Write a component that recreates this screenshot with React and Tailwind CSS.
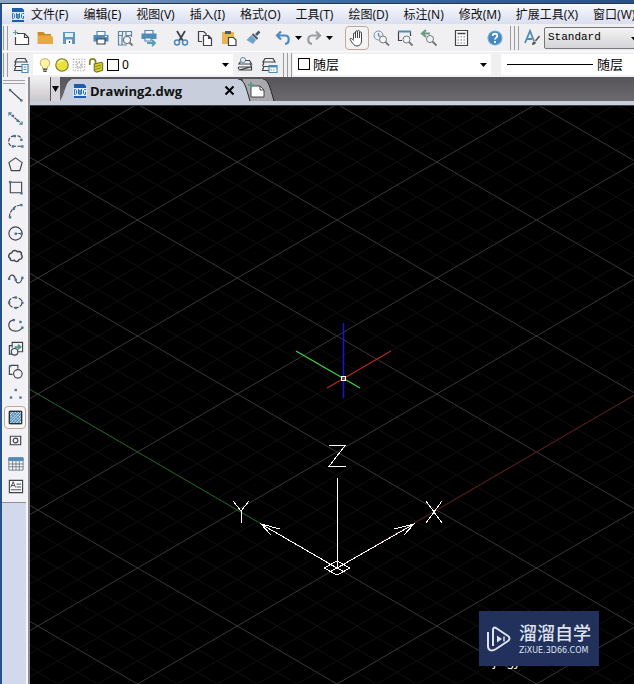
import React, { useState } from 'react';

const MENUS = [
  '文件(F)', '编辑(E)', '视图(V)', '插入(I)', '格式(O)', '工具(T)',
  '绘图(D)', '标注(N)', '修改(M)', '扩展工具(X)', '窗口(W)',
];

const DARK = '#3f444b';
const BLUE = '#4f8ab8';

const Icon = ({ children, size = 18 }) => (
  <svg
    width={size}
    height={size}
    viewBox="0 0 18 18"
    fill="none"
    stroke={DARK}
    strokeWidth="1.2"
    className="shrink-0"
    aria-hidden="true"
  >
    {children}
  </svg>
);

const Caret = ({ className = '' }) => (
  <svg width="7" height="4" viewBox="0 0 7 4" className={`shrink-0 ${className}`} aria-hidden="true">
    <path d="M0 0h7L3.5 4z" fill="#000" />
  </svg>
);

const Grip = () => (
  <div className="flex h-6 shrink-0 gap-[3px] px-px">
    <div className="w-px bg-[#9b9a9f]" />
    <div className="w-px bg-[#9b9a9f]" />
  </div>
);

const DwgLogo = () => (
  <svg width="14" height="16" viewBox="0 0 14 16" className="shrink-0" aria-hidden="true">
    <path d="M1 1h10l2 2v2H1z" fill="#1f5cab" />
    <path d="M0 5h14v8H0z" fill="#dcebfa" />
    <path d="M1 13h12v2H1z" fill="#1f5cab" />
    <g fill="none" stroke="#2f6fb8" strokeWidth="1">
      <path d="M1.500 6.500h1l1 1v3l-1 1h-1z" />
      <path d="M5.500 6v5l1 .5.5-.5V7v4l1 .5.500-.5V6" />
      <path d="M13 6.500h-1.500l-1 1v3l1 1h1v-2.500" />
    </g>
  </svg>
);

/* Main toolbar icons */
const STANDARD = {
  new: (
    <>
      <path d="M5 4.500h7.500l4 4v7H3.500V8" fill="#fff" />
      <path d="M12.500 4.500v4h4" />
      <path d="M1 3.500h5M3.500 1v5" stroke="#5aa0a0" />
    </>
  ),
  open: (
    <>
      <path d="M1.500 3h6l1.500 2h6v3h-13z" fill="#c98a25" stroke="none" />
      <path d="M1.500 15V6.500h13L17 8v7z" fill="#e8a941" stroke="none" />
    </>
  ),
  save: (
    <>
      <path d="M3 3h12v12H3z" fill="#5d97c2" stroke="none" />
      <path d="M5 4h8v4H5z" fill="#e6f0f7" stroke="none" />
      <path d="M6 10.500h6V15H6z" fill="#fff" stroke="none" />
      <path d="M9.500 12v2" />
    </>
  ),
  print: (
    <>
      <path d="M5 6V2.500h8V6" stroke={BLUE} fill="#f7f9fb" />
      <path d="M1.500 6h15v6.500h-15z" fill={BLUE} stroke="none" />
      <path d="M5 10h8v5H5z" fill="#f7f9fb" stroke={DARK} />
      <path d="M13 7.500h2" stroke="#fff" />
    </>
  ),
  preview: (
    <>
      <path d="M11 16H2.500V2.500h13V8M2.500 6.500h4v-4M6 6.500v9M6 11h3M10 2.500v4h5" stroke="#5b88a8" />
      <circle cx="11" cy="11" r="3.500" stroke="#777" fill="#eef4f8" />
      <path d="M13.500 13.500l3 3" stroke="#777" strokeWidth="2" />
    </>
  ),
  publish: (
    <>
      <path d="M5 5V1.500h8V5" stroke={BLUE} fill="#f7f9fb" />
      <path d="M1.500 4.500h15V10h-15z" fill={BLUE} stroke="none" />
      <path d="M5 9h6v3H5z" fill="#f7f9fb" stroke={BLUE} />
      <path d="M7 14h8M12 11l3 3-3 3" stroke="#5a9bb0" strokeWidth="1.800" />
    </>
  ),
  cut: (
    <>
      <path d="M5 2l6 10M13 2L7 12" strokeWidth="1.800" />
      <circle cx="5" cy="13.500" r="2.500" stroke={BLUE} strokeWidth="1.500" />
      <circle cx="13" cy="13.500" r="2.500" stroke={BLUE} strokeWidth="1.500" />
    </>
  ),
  copy: (
    <>
      <path d="M6 12.500H2.500v-10h5l2.500 2V6" />
      <path d="M7.500 6.500h5l3 3v7h-8zM12.500 6.500v3h3" fill="#fff" />
    </>
  ),
  paste: (
    <>
      <path d="M2 3h12v12H2z" fill="#e7b459" stroke="none" />
      <path d="M5 2h6v3H5z" fill="#55585e" stroke="none" />
      <path d="M8.500 8.500h5l2.500 2.500v5.500H8.500z" fill="#fff" />
    </>
  ),
  match: (
    <>
      <path d="M15.500 2.500L12 6" stroke="#47596e" strokeWidth="2.500" />
      <path d="M8.500 5l5 5" stroke="#47596e" strokeWidth="2.200" />
      <path d="M7.500 6l4.500 5-3 4L2.500 11z" fill="#6fa3c9" stroke="none" />
    </>
  ),
  undo: <path d="M7 2.500L3 6.500l4 4M3.500 6.500H11c5 0 5 8 0 8.500" stroke="#4d8cc0" strokeWidth="2.200" />,
  redo: <path d="M11 2.500l4 4-4 4M14.500 6.500H7c-5 0-5 8 0 8.500" stroke="#9a9da1" strokeWidth="2.200" />,
  hand: (
    <path
      d="M5.500 10.500V5c0-1.500 2-1.500 2 0V3c0-1.500 2-1.500 2 0V2.500c0-1.500 2-1.500 2 0V4c0-1.500 2-1.500 2 0v8c0 3-2 5-4.500 5S5.500 15.500 3 12c-2-3 0-4 2.500-.5M7.500 5v4M9.500 3v6M11.500 4v5"
      fill="#fff"
      strokeWidth="1"
    />
  ),
  zoomRt: (
    <>
      <circle cx="6.500" cy="6.500" r="4.500" stroke="#7b8fa0" strokeWidth="1" />
      <path d="M6.500 4v3h2" stroke={BLUE} />
      <circle cx="11" cy="10.500" r="3.500" stroke="#777" fill="#f3f6f8" strokeWidth="1" />
      <path d="M13.500 13l3.500 3.500" stroke="#777" strokeWidth="1.800" />
    </>
  ),
  zoomWin: (
    <>
      <path d="M6 11.500H2.500v-9h12V7" />
      <path d="M2 2.500h13" stroke={BLUE} strokeWidth="2" />
      <circle cx="10.500" cy="10.500" r="3.500" stroke="#777" fill="#eef4f8" strokeWidth="1" />
      <path d="M13 13l3.500 3.500" stroke="#777" strokeWidth="1.800" />
    </>
  ),
  zoomPrev: (
    <>
      <path d="M6 1L2 4.500 6 8M3 4.500h7" stroke="#6b9c86" strokeWidth="2.200" />
      <circle cx="10" cy="10" r="3.500" stroke="#777" fill="#eef4f8" strokeWidth="1" />
      <path d="M12.500 12.500l4 4" stroke="#777" strokeWidth="1.800" />
    </>
  ),
  calc: (
    <>
      <path d="M3.500 1.500h12v15h-12z" fill="#fff" />
      <path d="M5.500 4.500h8" strokeWidth="1.500" />
      <path d="M5.500 8h8M5.500 11h8M5.500 14h8" strokeDasharray="1.500 1.500" stroke="#777" />
    </>
  ),
  help: (
    <>
      <circle cx="9" cy="9" r="7" fill="#4488bd" stroke="#7aaacf" />
      <path d="M6.700 7c0-3 4.600-3 4.600 0 0 1.500-2.300 1.800-2.300 3.500M9 12v2" stroke="#fff" strokeWidth="1.800" />
    </>
  ),
  textStyle: (
    <>
      <path d="M2 14L7 2l4 10M4 10h5" stroke={BLUE} strokeWidth="1.800" />
      <path d="M16.500 7l-4 5" stroke="#555" strokeWidth="1.500" />
      <path d="M9 16c0-3 1.500-4 3-3.500 1.500.5 1 3.500-3 3.500z" fill="#555" stroke="none" />
    </>
  ),
};

const stack = <path d="M5 2.500h8L15 6H3zM3.500 6v2l-1 2M3 10.500h12M3.500 10.500v1l-1 3h8" />;

const LAYER = {
  manager: (
    <>
      {stack}
      <path d="M10 8.500h6v8h-6z" fill="#fff" stroke={BLUE} />
      <path d="M11.500 11h3M11.500 13.500h3" stroke={BLUE} />
    </>
  ),
  current: (
    <>
      <circle cx="7" cy="4" r="2.500" stroke="#5b88a8" strokeWidth="1" />
      <path d="M9.500 4.500h4l2 3.500H3l1.500-2.500M2.500 11h13l-1-3M2.500 11v2M15.500 11v3h-13z" />
    </>
  ),
  states: (
    <>
      {stack}
      <path d="M9 9.500h8v7H9z" fill="#fff" stroke={BLUE} />
      <path d="M9 10.500h8" stroke={BLUE} strokeWidth="2" />
      <path d="M10.500 14h5" stroke={BLUE} strokeDasharray="1.500 1" />
    </>
  ),
  bulb: (
    <>
      <path d="M6 11C1.500 7 4 2 9 2s7.500 5 3 9l-.5 2h-5z" fill="#fdf3a8" stroke="#b99b3b" strokeWidth="1" />
      <path d="M6.500 14h5M7 16h4" stroke="#555" strokeWidth="1.500" />
    </>
  ),
  sun: (
    <>
      <circle cx="9" cy="9" r="7" fill="#e8e13c" stroke="#77752e" strokeWidth="1.200" />
      <path d="M5 7c1-3 4-3.500 6-2.500" stroke="#fffbb0" strokeWidth="1.500" />
    </>
  ),
  freeze: (
    <>
      <path d="M2.500 2.500h13v13h-13zM5.500 5.500h7v7h-7z" stroke="#aaa" strokeDasharray="1.500 1.500" />
      <circle cx="9" cy="9" r="2.500" stroke="#999" strokeDasharray="1.500 1" />
    </>
  ),
  lock: (
    <>
      <path d="M2 9V5c0-4 6.500-4 6.500 0v3" stroke="#8a8420" strokeWidth="2" />
      <path d="M7 8l8-2 1.500 1v8l-7 2L7 15.500z" fill="#ded534" stroke="#77721f" />
      <path d="M8 11l7-2M8 14l7-2" stroke="#77721f" strokeWidth="1" />
    </>
  ),
};

/* Draw toolbar, top to bottom */
const dot = (x, y) => <rect x={x - 1} y={y - 1} width="2.500" height="2.500" fill="#4a7394" stroke="none" />;

const DRAW = [
  ['直线', <>
    <path d="M3 3l12 11" />{dot(3, 3)}{dot(15, 14)}
  </>],
  ['构造线', <>
    <path d="M2 3l14 12" strokeDasharray="3 1" /><path d="M2 6V3h3M16 12v3h-3" stroke={BLUE} />{dot(6, 6)}{dot(11, 11)}
  </>],
  ['多段线', <>
    <path d="M8 3C0 3 0 14 6 14h10M11 3c3 0 4 2 4 4" strokeDasharray="4 1.500" />{dot(8, 3)}{dot(6, 14)}{dot(16, 14)}{dot(15, 7)}
  </>],
  ['正多边形', <path d="M9 2l7 5-2.500 8.500h-9L2 7z" />],
  ['矩形', <>
    <path d="M3.500 3.500h12v11h-12z" />{dot(3, 3)}{dot(15, 15)}
  </>],
  ['圆弧', <>
    <path d="M2.500 16C3 9 8 3.500 15.500 3" strokeDasharray="4 1" />{dot(3, 16)}{dot(7, 7)}{dot(15, 3)}
  </>],
  ['圆', <>
    <circle cx="9" cy="9" r="7" /><path d="M9 9h6" strokeDasharray="2 1" />{dot(9, 9)}{dot(15, 9)}
  </>],
  ['修订云线', <path d="M5 5c1-3 5-3 6-1 3-1 5 1 4 3 2 2 1 5-2 5-1 3-4 3-5 1-3 1-5 0-4.500-2C1 10 1 6 5 5z" strokeWidth="1.500" />],
  ['样条曲线', <>
    <path d="M2 8c2-6 6-4 7 1s5 5 7-1" />{dot(2, 8)}{dot(9, 9)}{dot(16, 7)}
  </>],
  ['椭圆', <>
    <ellipse cx="9" cy="9" rx="7" ry="5.500" strokeDasharray="5 1.500" />{dot(9, 3.5)}{dot(2, 9)}{dot(16, 9)}{dot(9, 14.5)}
  </>],
  ['椭圆弧', <>
    <path d="M7 3C-1 5 1 15 9 15c4 0 6-2 7-4" />{dot(7, 3)}{dot(14, 5)}{dot(16, 11)}
  </>],
  ['插入块', <>
    <path d="M5.500 8V2.500h11v10H11M5 6H2.500v9H5" />
    <circle cx="8" cy="12.500" r="3.500" fill="#f3f3f7" />
    <path d="M8 7.500h6M11.500 5l3 2.500-3 2.500" stroke="#5a9680" strokeWidth="1.800" />
  </>],
  ['创建块', <>
    <path d="M4 2.500h7.500V6M2.500 4v8H6" /><circle cx="11.500" cy="11.500" r="4.500" fill="#f3f3f7" />{dot(3, 3)}
  </>],
  ['点', <>{dot(9, 4)}{dot(4, 12)}{dot(14, 12)}</>],
  ['图案填充', <>
    <rect x="2.500" y="2.500" width="13" height="13" fill="#dcebf6" />
    <path d="M3 5l2-2M3 8l5-5M3 11l8-8M3 14l11-11M5 15L15 5M8 15l7-7M11 15l4-4" stroke={BLUE} strokeWidth="1.200" />
    <path d="M3 12l3 3M3 8l7 7M3 4l11 11M6 3l9 9M10 3l5 5" stroke={BLUE} strokeWidth=".8" />
    <rect x="2.500" y="2.500" width="13" height="13" rx="1" stroke="#26303a" />
  </>],
  ['面域', <>
    <path d="M3.500 4.500h11v9h-11z" /><circle cx="9" cy="9" r="2.500" />
  </>],
  ['表格', <>
    <path d="M2 3h15v13H2z" fill="#fff" stroke="#6b7886" strokeWidth="1" />
    <path d="M2 3h15v3H2z" fill={BLUE} stroke={BLUE} strokeWidth="1" />
    <path d="M2 9.500h15M2 12.500h15M6 6v10M9.500 6v10M13 6v10" stroke="#6b7886" strokeWidth="1" />
  </>],
  ['多行文字', <>
    <path d="M2.500 2.500h14v13h-14z" fill="#fff" />
    <path d="M4 10l2.500-6L9 10M5 8h3M10 6.500h5M10 9.500h5M4 12.500h11" strokeWidth="1" />
  </>],
];

const ToolButton = ({ name, icon, active }) => (
  <button
    type="button"
    aria-label={name}
    className={`flex h-6 w-6 shrink-0 items-center justify-center ${
      active ? 'rounded-sm border border-[#c2a89c] bg-[#f4f2f3]' : ''
    }`}
  >
    <Icon>{icon}</Icon>
  </button>
);

const MenuBar = () => (
  <nav className="flex h-5 shrink-0 items-center overflow-hidden border-t border-[#f8faff] bg-linear-to-b from-[#f6f8fd] to-[#d9def0] pl-[9px] whitespace-nowrap">
    <DwgLogo />
    <div className="flex gap-[15px] pl-[6px] text-xs leading-5 text-[#111]">
      {MENUS.map((menu) => (
        <button key={menu} type="button">{menu}</button>
      ))}
    </div>
  </nav>
);

const StandardToolbar = () => (
  <div className="flex h-[27px] shrink-0 items-center overflow-hidden bg-[#f0eff1]">
    <Grip />
    <ToolButton name="新建" icon={STANDARD.new} />
    <ToolButton name="打开" icon={STANDARD.open} />
    <ToolButton name="保存" icon={STANDARD.save} />
    <div className="flex pl-2">
      <ToolButton name="打印" icon={STANDARD.print} />
      <ToolButton name="打印预览" icon={STANDARD.preview} />
      <ToolButton name="发布" icon={STANDARD.publish} />
    </div>
    <div className="flex pl-2">
      <ToolButton name="剪切" icon={STANDARD.cut} />
      <ToolButton name="复制" icon={STANDARD.copy} />
      <ToolButton name="粘贴" icon={STANDARD.paste} />
      <ToolButton name="特性匹配" icon={STANDARD.match} />
    </div>
    <div className="flex items-center pl-[6px]">
      <ToolButton name="放弃" icon={STANDARD.undo} />
      <Caret />
      <ToolButton name="重做" icon={STANDARD.redo} />
      <Caret />
    </div>
    <div className="flex pl-3">
      <ToolButton name="平移" icon={STANDARD.hand} active />
      <ToolButton name="实时缩放" icon={STANDARD.zoomRt} />
      <ToolButton name="窗口缩放" icon={STANDARD.zoomWin} />
      <ToolButton name="缩放上一个" icon={STANDARD.zoomPrev} />
    </div>
    <div className="flex gap-[10px] pr-[3px] pl-2">
      <ToolButton name="计算器" icon={STANDARD.calc} />
      <ToolButton name="帮助" icon={STANDARD.help} />
    </div>
    <div className="mr-[2px] h-6 w-px shrink-0 bg-[#9b9a9f]" />
    <Grip />
    <ToolButton name="文字样式" icon={STANDARD.textStyle} />
    <div className="relative w-24 shrink-0">
      <select
        aria-label="文字样式"
        className="block h-[22px] w-full appearance-none rounded-xs border border-[#77757a] bg-linear-to-b from-[#f4f4f4] to-[#d5d4d6] pl-[3px] font-['Liberation_Mono','Noto_Sans_CJK_SC',monospace] text-[11px] text-black"
      >
        <option>Standard</option>
      </select>
      <Caret className="absolute top-[10px] right-[2px]" />
    </div>
  </div>
);

const PropertyToolbar = () => (
  <div className="flex h-[26px] shrink-0 items-center overflow-hidden border-t border-white bg-[#f0eff1]">
    <Grip />
    <ToolButton name="图层特性管理器" icon={LAYER.manager} />
    <div className="relative w-[200px] shrink-0">
      <select
        aria-label="图层"
        className="block h-[21px] w-full appearance-none bg-white pl-[89px] text-xs text-black"
      >
        <option>0</option>
      </select>
      <div className="pointer-events-none absolute inset-y-0 left-1 flex items-center gap-px">
        <Icon size={16}>{LAYER.bulb}</Icon>
        <Icon size={16}>{LAYER.sun}</Icon>
        <Icon size={16}>{LAYER.freeze}</Icon>
        <Icon size={16}>{LAYER.lock}</Icon>
        <div className="ml-[2px] h-3 w-3 border border-black bg-white" />
      </div>
      <Caret className="absolute top-[9px] right-1" />
    </div>
    <ToolButton name="将对象的图层置为当前" icon={LAYER.current} />
    <ToolButton name="图层状态" icon={LAYER.states} />
    <div className="mr-[2px] ml-[2px] h-6 w-px shrink-0 bg-[#9b9a9f]" />
    <Grip />
    <div className="relative w-[198px] shrink-0">
      <select
        aria-label="颜色"
        className="block h-[21px] w-full appearance-none bg-white pl-[20px] text-[13px] text-black"
      >
        <option>随层</option>
      </select>
      <div className="pointer-events-none absolute top-[4px] left-[5px] h-3 w-3 border border-black bg-white" />
      <Caret className="absolute top-[9px] right-1" />
    </div>
    <div className="relative ml-[10px] w-[200px] shrink-0">
      <select
        aria-label="线型"
        className="block h-[21px] w-full appearance-none bg-white pl-24 text-[13px] text-black"
      >
        <option>随层</option>
      </select>
      <div className="pointer-events-none absolute top-[10px] left-[6px] h-px w-[86px] bg-black" />
    </div>
  </div>
);

const DrawToolbar = () => {
  const [active, setActive] = useState('图案填充');

  return (
    <aside className="flex w-[26px] shrink-0 flex-col border-r-2 border-[#f5f5fa] bg-[#d3d9ec]">
      <div className="flex flex-col border-b border-[#8f929c] bg-[#f2f2f6] pb-1">
        <div className="mx-px mt-[3px] h-1 border-y border-[#a3a3a8]" />
        {DRAW.map(([name, icon]) => (
          <button
            key={name}
            type="button"
            aria-label={name}
            onClick={() => setActive(name)}
            className={`ml-[2px] flex h-[23px] w-[22px] items-center justify-center ${
              active === name ? 'rounded-sm border border-[#c2a89c] bg-[#faf7f7]' : ''
            }`}
          >
            <Icon size={17}>{icon}</Icon>
          </button>
        ))}
      </div>
    </aside>
  );
};

const FileTabs = () => (
  <div className="flex h-[29px] shrink-0 flex-col border-b border-[#3f4348]">
    <div className="flex h-6 items-end bg-linear-to-b from-[#575459] to-[#6e6b70]">
      <div className="h-full w-[20px] bg-linear-to-b from-[#f1f0f2] to-[#c9c7cb]" />
      <button
        type="button"
        aria-label="文件列表"
        className="flex h-full w-[10px] items-center justify-center border-l border-[#55555a] bg-[#d8d6da]"
      >
        <svg width="7" height="6" viewBox="0 0 7 6" aria-hidden="true">
          <path d="M0 0h7L3.500 6z" />
        </svg>
      </button>
      <svg width="13" height="22" viewBox="0 0 13 22" aria-hidden="true">
        <path d="M0 22C5 16 5 1 13 0v22z" fill="#c8cedb" />
      </svg>
      <div className="flex h-[22px] items-center bg-[#c8cedb]">
        <button type="button" className="flex items-center gap-[3px] pt-px">
          <DwgLogo />
          <span className="w-[134px] text-left font-['Open_Sans','Noto_Sans_CJK_SC',sans-serif] text-[13px] leading-5 font-bold text-[#111]">
            Drawing2.dwg
          </span>
        </button>
        <button type="button" aria-label="关闭" className="pr-[3px]">
          <svg width="11" height="11" viewBox="0 0 11 11" aria-hidden="true">
            <path d="M1.500 1.500l8 8M9.500 1.500l-8 8" stroke="#000" strokeWidth="2" />
          </svg>
        </button>
      </div>
      <button type="button" aria-label="新建图形">
        <svg width="42" height="22" viewBox="0 0 42 22" className="block" aria-hidden="true">
          <path d="M5 22V0h20c5 0 7 8 11 22z" fill="#a9a9ad" />
          <path d="M25 0c5 0 7 8 11 22" fill="none" stroke="#242428" />
          <path d="M0 0c6 0 8 8 12 22H0z" fill="#c8cedb" />
          <path d="M0 0c6 0 8 8 12 22" fill="none" stroke="#242428" />
          <path d="M14 7h8l4 4v7H13v-9z" fill="#fff" stroke="#444" />
          <path d="M22 7v4h4" fill="none" stroke="#444" />
          <path d="M10 6h6M13 3v6" stroke="#5d9b86" strokeWidth="2" />
        </svg>
      </button>
    </div>
    <div className="h-1 bg-[#c8cedb]" />
  </div>
);

/* Isometric grid, centred on the UCS origin */
const CELL_W = 199.5;
const CELL_H = 116;
const SLOPE = CELL_H / CELL_W;
const REACH = 2400;

const gridLines = [];
for (let i = -80; i <= 80; i++) {
  gridLines.push({ offset: (i * CELL_H) / 5, major: i % 5 === 0 });
}
gridLines.sort((a, b) => a.major - b.major);

const IsoGrid = () => (
  <g strokeWidth="1">
    {gridLines.map(({ offset, major }) => (
      <path
        key={offset}
        d={`M${-REACH} ${offset - REACH * SLOPE}L${REACH} ${offset + REACH * SLOPE}M${-REACH} ${offset + REACH * SLOPE}L${REACH} ${offset - REACH * SLOPE}`}
        stroke={major ? '#383838' : '#101010'}
      />
    ))}
  </g>
);

const Viewport = () => (
  <main className="relative min-h-0 flex-1 overflow-hidden bg-black">
    <svg className="absolute inset-0 h-full w-full" fill="none" aria-label="绘图区">
      <g transform="translate(307 462)">
        <IsoGrid />
        <path d={`M0 0L${-REACH} ${-REACH * SLOPE}`} stroke="#145a1c" />
        <path d={`M0 0L${REACH} ${-REACH * SLOPE}`} stroke="#5a1212" />

        {/* UCS icon */}
        <g stroke="#fff" shapeRendering="crispEdges">
          <path d="M.5 0V-90" />
          <path d="M0 0L-76-44M-57-39l-19-5 10 11" />
          <path d="M0 0L77-44M57-39l20-5-10 11" />
          <path d="M-13 0L0-7 13 0 0 7zM-7-3.500L7 3.500M-7 3.500L7-3.500" />
          <path d="M-8-122.500H8L-8-101.500H9" />
          <path d="M-104-67l8 10 8-10M-96-57v12" />
          <path d="M89-67l16 22M105-67L89-45" />
        </g>

        {/* Crosshair */}
        <path d="M6.500-245v75" stroke="#1818c8" strokeWidth="1.500" />
        <path d="M-41-217L23-180" stroke="#43d443" strokeWidth="1.200" />
        <path d="M54-217L-10-180" stroke="#b82626" strokeWidth="1.200" />
        <rect x="4.500" y="-191.500" width="4" height="4" stroke="#fff" />
      </g>
    </svg>

    <span className="absolute right-[37px] bottom-[14px] text-xs leading-4 text-white">
      jingyan.baidu.com
    </span>
    <div className="absolute right-[35px] bottom-[18px] flex h-[55px] w-[120px] items-center gap-2 bg-[#22315c] pl-2 text-[#dfe3ee]">
      <svg width="24" height="26" viewBox="0 0 24 26" fill="none" stroke="currentColor" strokeWidth="2" aria-hidden="true">
        <path d="M6 20V4c0-2 1-3 3-2l12 8c2 1.500 2 3.500 0 5L9 23c-5 3-8 1-8-3V6" />
        <path d="M10 9.500v7l5-3.500z" fill="currentColor" stroke="none" />
        <path d="M17 10.500v5" strokeWidth="1.500" />
      </svg>
      <div className="whitespace-nowrap">
        <div className="text-[18px] leading-6 font-medium">溜溜自学</div>
        <div className="font-['DejaVu_Sans',sans-serif] text-[8px] leading-3">ZiXUE.3D66.COM</div>
      </div>
    </div>
  </main>
);

const App = () => (
  <div className="flex h-screen flex-col overflow-hidden bg-[#f0eff1] font-['Noto_Sans','Noto_Sans_CJK_SC',sans-serif]">
    <div className="h-1 shrink-0 border-b border-[#26384f] bg-linear-to-r from-[#8fa6c4] via-[#3c6ea8] to-[#274f86]" />
    <div className="flex min-h-0 flex-1 flex-col border-l-2 border-[#24518a]">
      <MenuBar />
      <StandardToolbar />
      <PropertyToolbar />
      <div className="flex min-h-0 flex-1">
        <DrawToolbar />
        <div className="flex min-w-0 flex-1 flex-col border-l-2 border-[#8d8d92]">
          <FileTabs />
          <Viewport />
        </div>
      </div>
    </div>
  </div>
);

export default App;
